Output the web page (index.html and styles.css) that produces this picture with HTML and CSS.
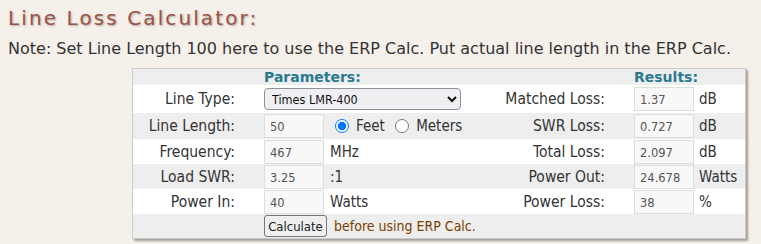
FILE: index.html
```html
<!DOCTYPE html>
<html lang="en">
<head>
    <meta charset="UTF-8">
    <title>Line Loss Calculator</title>
    <link rel="stylesheet" href="styles.css">
</head>
<body>
    <h2 class="title">Line Loss Calculator:</h2>
    <p class="note">Note: Set Line Length 100 here to use the ERP Calc. Put actual line length in the ERP Calc.</p>
    <div class="calc">
        <table class="grid">
            <colgroup>
                <col class="c1"><col class="c2"><col class="c3"><col class="c4"><col class="c5"><col class="c6">
            </colgroup>
            <tr class="head">
                <td></td>
                <td colspan="2" class="hd-params">Parameters:</td>
                <td></td>
                <td colspan="2" class="hd-results">Results:</td>
            </tr>
            <tr class="odd r1">
                <td class="lbl">Line Type:</td>
                <td colspan="2"><select class="sel"><option>Times LMR-400</option></select></td>
                <td class="lbl">Matched Loss:</td>
                <td><input class="num" type="text" value="1.37"></td>
                <td class="unit">dB</td>
            </tr>
            <tr class="even r2">
                <td class="lbl">Line Length:</td>
                <td><input class="num" type="text" value="50"></td>
                <td class="unit">
                    <label class="opt"><input type="radio" name="u" checked>Feet</label>
                    <label class="opt"><input type="radio" name="u">Meters</label>
                </td>
                <td class="lbl">SWR Loss:</td>
                <td><input class="num" type="text" value="0.727"></td>
                <td class="unit">dB</td>
            </tr>
            <tr class="odd">
                <td class="lbl">Frequency:</td>
                <td><input class="num" type="text" value="467"></td>
                <td class="unit">MHz</td>
                <td class="lbl">Total Loss:</td>
                <td><input class="num" type="text" value="2.097"></td>
                <td class="unit">dB</td>
            </tr>
            <tr class="even">
                <td class="lbl">Load SWR:</td>
                <td><input class="num" type="text" value="3.25"></td>
                <td class="unit">:1</td>
                <td class="lbl">Power Out:</td>
                <td><input class="num" type="text" value="24.678"></td>
                <td class="unit">Watts</td>
            </tr>
            <tr class="odd">
                <td class="lbl">Power In:</td>
                <td><input class="num" type="text" value="40"></td>
                <td class="unit">Watts</td>
                <td class="lbl">Power Loss:</td>
                <td><input class="num" type="text" value="38"></td>
                <td class="unit">%</td>
            </tr>
            <tr class="even r6">
                <td></td>
                <td colspan="5" class="go"><button class="btn">Calculate</button><span class="hint">before using ERP Calc.</span></td>
            </tr>
        </table>
    </div>
</body>
</html>
```

FILE: styles.css
```css
* {
    margin: 0;
    padding: 0;
    box-sizing: border-box;
}
body {
    background: #f6f0eb;
    font-family: "DejaVu Sans", Verdana, sans-serif;
    color: #333;
    padding: 5px 8px;
}
.title {
    font-size: 20px;
    font-weight: normal;
    letter-spacing: 2.1px;
    color: #9b5445;
    text-shadow: 1px 1px 2px rgba(0, 0, 0, 0.3);
    line-height: 26px;
}
.note {
    font-size: 16px;
    line-height: 20px;
    margin-top: 8px;
    color: #333;
}
.calc {
    width: 614px;
    margin: 9px 0 0 124px;
    border: 1px solid #ccc;
    box-shadow: 2px 2px 2px rgba(0, 0, 0, 0.35);
}
.grid {
    width: 100%;
    border-collapse: collapse;
    table-layout: fixed;
    font-size: 15.5px;
    font-stretch: condensed;
}
.c1 { width: 131px; }
.c2 { width: 65px; }
.c3 { width: 141px; }
.c4 { width: 164px; }
.c5 { width: 64px; }
.c6 { width: 47px; }
.grid td {
    padding: 0;
    vertical-align: middle;
}
.grid tr {
    height: 25px;
}
.grid .head {
    background: #eee;
    height: 16px;
}
.grid .r1 {
    height: 28px;
}
.grid .r2 {
    height: 26px;
}
.grid .r6 {
    height: 24px;
}
.head td {
    font-weight: bold;
    font-stretch: normal;
    color: #2a7a8f;
    line-height: 15px;
    font-size: 14px;
}
.odd {
    background: #fff;
}
.even {
    background: #eee;
}
.lbl {
    text-align: right;
    padding-right: 29px !important;
}
.unit {
    padding-left: 1px !important;
    font-size: 15px;
}
.num {
    width: 60px;
    height: 24px;
    border: 1px solid #ddd;
    background: #f8f8f8;
    font-family: "DejaVu Sans", Verdana, sans-serif;
    font-size: 11.5px;
    color: #555;
    padding: 2px 5px 0;
    display: block;
}
.sel {
    width: 197px;
    height: 22px;
    margin: 3px 0;
    border: 1px solid #8f8f9d;
    border-radius: 4px;
    background: #efeff1;
    font-family: "DejaVu Sans", Verdana, sans-serif;
    font-stretch: condensed;
    font-size: 12.5px;
    color: #111;
    padding-left: 3px;
    display: block;
}
.opt input {
    margin: 0 7px 0 5px;
    vertical-align: -2px;
    width: 14px;
    height: 14px;
}
.opt + .opt input {
    margin-left: 6px;
}
.go {
    padding: 1px 0 !important;
}
.btn {
    font-family: "DejaVu Sans", Verdana, sans-serif;
    font-stretch: condensed;
    font-size: 13px;
    height: 22px;
    width: 63px;
    padding: 0;
    border: 1px solid #767676;
    border-radius: 3px;
    background: #efefef;
    color: #222;
    vertical-align: middle;
}
.hint {
    color: #7b3f00;
    margin-left: 7px;
    font-size: 14px;
    vertical-align: middle;
}
```
